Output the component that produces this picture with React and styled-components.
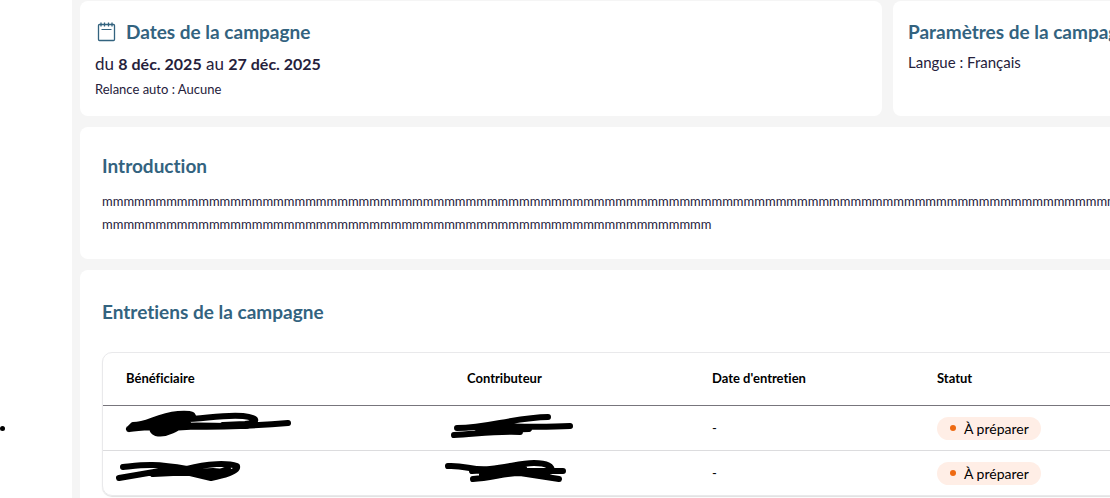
import React from "react";
import styled, { createGlobalStyle } from "styled-components";

const GlobalStyle = createGlobalStyle`
  * { box-sizing: border-box; }
  body {
    margin: 0;
    background: #f5f5f5;
    color: #25213b;
    font-family: Lato, "Liberation Sans", sans-serif;
    font-size: 13px;
    overflow: hidden;
  }
`;

const Page = styled.div`
  display: flex;
  min-height: 100vh;
`;

const SideBar = styled.aside`
  flex: 0 0 72px;
  display: flex;
  align-items: flex-end;
  height: 100vh;
  padding-bottom: 67px;
  background: #fff;
`;

const Marker = styled.span`
  width: 5px;
  height: 5px;
  border-radius: 50%;
  background: #000;
`;

const Main = styled.main`
  flex: 1 0 1631px;
  display: flex;
  flex-direction: column;
  gap: 11px;
  padding: 1px 8px 8px;
`;

const CardRow = styled.div`
  display: grid;
  grid-template-columns: 1fr 1fr;
  gap: 11px;
`;

const cardPadding = {
  compact: "16px 15px 15px",
  text: "24px 22px 23px",
  table: "27px 22px 24px",
};

const Card = styled.section`
  padding: ${(p) => cardPadding[p.$kind]};
  border-radius: 8px;
  background: #fff;
`;

const Title = styled.h2`
  display: flex;
  align-items: center;
  gap: 8px;
  margin: 0;
  color: #33637f;
  font-size: 19px;
  font-weight: 700;
  font-variant-ligatures: none;
  line-height: 30px;
`;

const Period = styled.p`
  margin: 4px 0 0;
  font-size: 17px;
  line-height: 26px;

  strong {
    font-size: 16px;
    font-weight: 700;
  }
`;

const Language = styled.p`
  margin: 3px 0 0;
  font-size: 15px;
  line-height: 24px;
`;

const Reminder = styled.p`
  margin: 0;
  font-size: 13px;
  line-height: 24px;
`;

const IntroText = styled.p`
  margin: 9px 0 0;
  line-height: 23px;
  white-space: nowrap;
`;

const TableFrame = styled.div`
  margin-top: 25px;
  border: 1px solid #e9e9eb;
  border-radius: 10px;
  box-shadow: 0 1px 1px #e0e0e0;
`;

const Table = styled.table`
  width: 100%;
  border-collapse: separate;
  border-spacing: 0;
  table-layout: fixed;
  color: #000;
`;

const Column = styled.col`
  width: ${(p) => p.$width};
`;

const HeadCell = styled.th`
  height: 53px;
  padding: 0 23px 2px;
  border-bottom: 1px solid #77757c;
  font-weight: 700;
  font-variant-ligatures: none;
  text-align: left;
`;

const Cell = styled.td`
  position: relative;
  height: ${(p) => (p.$last ? "44px" : "45px")};
  padding: 0 23px;
  border-bottom: ${(p) => (p.$last ? "0" : "1px solid #dcdcde")};
`;

const Scribble = styled.svg`
  position: absolute;
  top: 0;
  left: 0;
  fill: none;
  stroke: #000;
  stroke-width: 6;
  stroke-linecap: round;
  stroke-linejoin: round;
`;

const Badge = styled.span`
  display: inline-flex;
  align-items: center;
  gap: 8px;
  height: 23px;
  padding: 0 12px 0 13px;
  border-radius: 12px;
  background: #ffeee6;
  font-size: 14px;
`;

const Dot = styled.span`
  width: 6px;
  height: 6px;
  border-radius: 50%;
  background: #ee6a12;
`;

const CalendarIcon = () => (
  <svg width="23" height="22" viewBox="0 0 23 22" fill="none" stroke="#33637f" aria-hidden="true">
    <rect x="3.5" y="3.5" width="16" height="16" rx="1" strokeWidth="1.3" />
    <path d="M6.5 8.5h10" />
    <path d="M6 1.5v4M9.5 1.5v4M13.5 1.5v4M17 1.5v4" strokeWidth="1.3" />
  </svg>
);

const Masked = ({ path }) => (
  <Scribble width="200" height="44" role="img" aria-label="Nom masqué">
    <path d={path} />
  </Scribble>
);

const interviews = [
  {
    beneficiary:
      "M26 23L30 19C45 19 53 10 75 8C89 7 94 9 86 14C76 21 64 30 53 27C42 22 60 14 78 13C95 14 120 8 140 10C158 12 154 17 142 18L120 19M26 23C60 18 110 24 185 17M34 21L80 17M58 21C80 18 105 20 145 20M50 23L100 20",
    contributor:
      "M104 11C88 11 72 14 56 17C40 20 27 22 13 22M10 29C32 28 50 25 76 26M33 22C60 19 90 22 126 20M35 25L85 23",
  },
  {
    beneficiary:
      "M20 16C40 14 50 12 84 18C105 12 125 12 134 15C136 21 118 25 108 27L87 22L57 20L16 27M50 23L110 20L122 21M90 19L108 24L125 18",
    contributor:
      "M4 15C22 14 28 20 46 18C66 16 76 12 90 12C104 12 108 16 108 20L119 20M28 20L80 17M29 28C48 27 60 22 76 22L115 28M38 24L76 21M64 20L108 20L90 23",
  },
];

export default function App() {
  return (
    <>
      <GlobalStyle />
      <Page>
        <SideBar><Marker /></SideBar>
        <Main>
          <CardRow>
            <Card $kind="compact">
              <Title><CalendarIcon />Dates de la campagne</Title>
              <Period>du <strong>8 déc. 2025</strong> au <strong>27 déc. 2025</strong></Period>
              <Reminder>Relance auto : Aucune</Reminder>
            </Card>
            <Card $kind="compact">
              <Title>Paramètres de la campagne</Title>
              <Language>Langue : Français</Language>
            </Card>
          </CardRow>
          <Card $kind="text">
            <Title>Introduction</Title>
            <IntroText>{"m".repeat(145)}<br />{"m".repeat(57)}</IntroText>
          </Card>
          <Card $kind="table">
            <Title>Entretiens de la campagne</Title>
            <TableFrame>
              <Table>
                <colgroup>
                  <Column $width="341px" />
                  <Column $width="245px" />
                  <Column $width="225px" />
                  <Column $width="auto" />
                </colgroup>
                <thead>
                  <tr>
                    <HeadCell scope="col">Bénéficiaire</HeadCell>
                    <HeadCell scope="col">Contributeur</HeadCell>
                    <HeadCell scope="col">Date d'entretien</HeadCell>
                    <HeadCell scope="col">Statut</HeadCell>
                  </tr>
                </thead>
                <tbody>
                  {interviews.map((item, i) => (
                    <tr key={i}>
                      <Cell $last={i === 1}><Masked path={item.beneficiary} /></Cell>
                      <Cell $last={i === 1}><Masked path={item.contributor} /></Cell>
                      <Cell $last={i === 1}>-</Cell>
                      <Cell $last={i === 1}><Badge><Dot />À préparer</Badge></Cell>
                    </tr>
                  ))}
                </tbody>
              </Table>
            </TableFrame>
          </Card>
        </Main>
      </Page>
    </>
  );
}
